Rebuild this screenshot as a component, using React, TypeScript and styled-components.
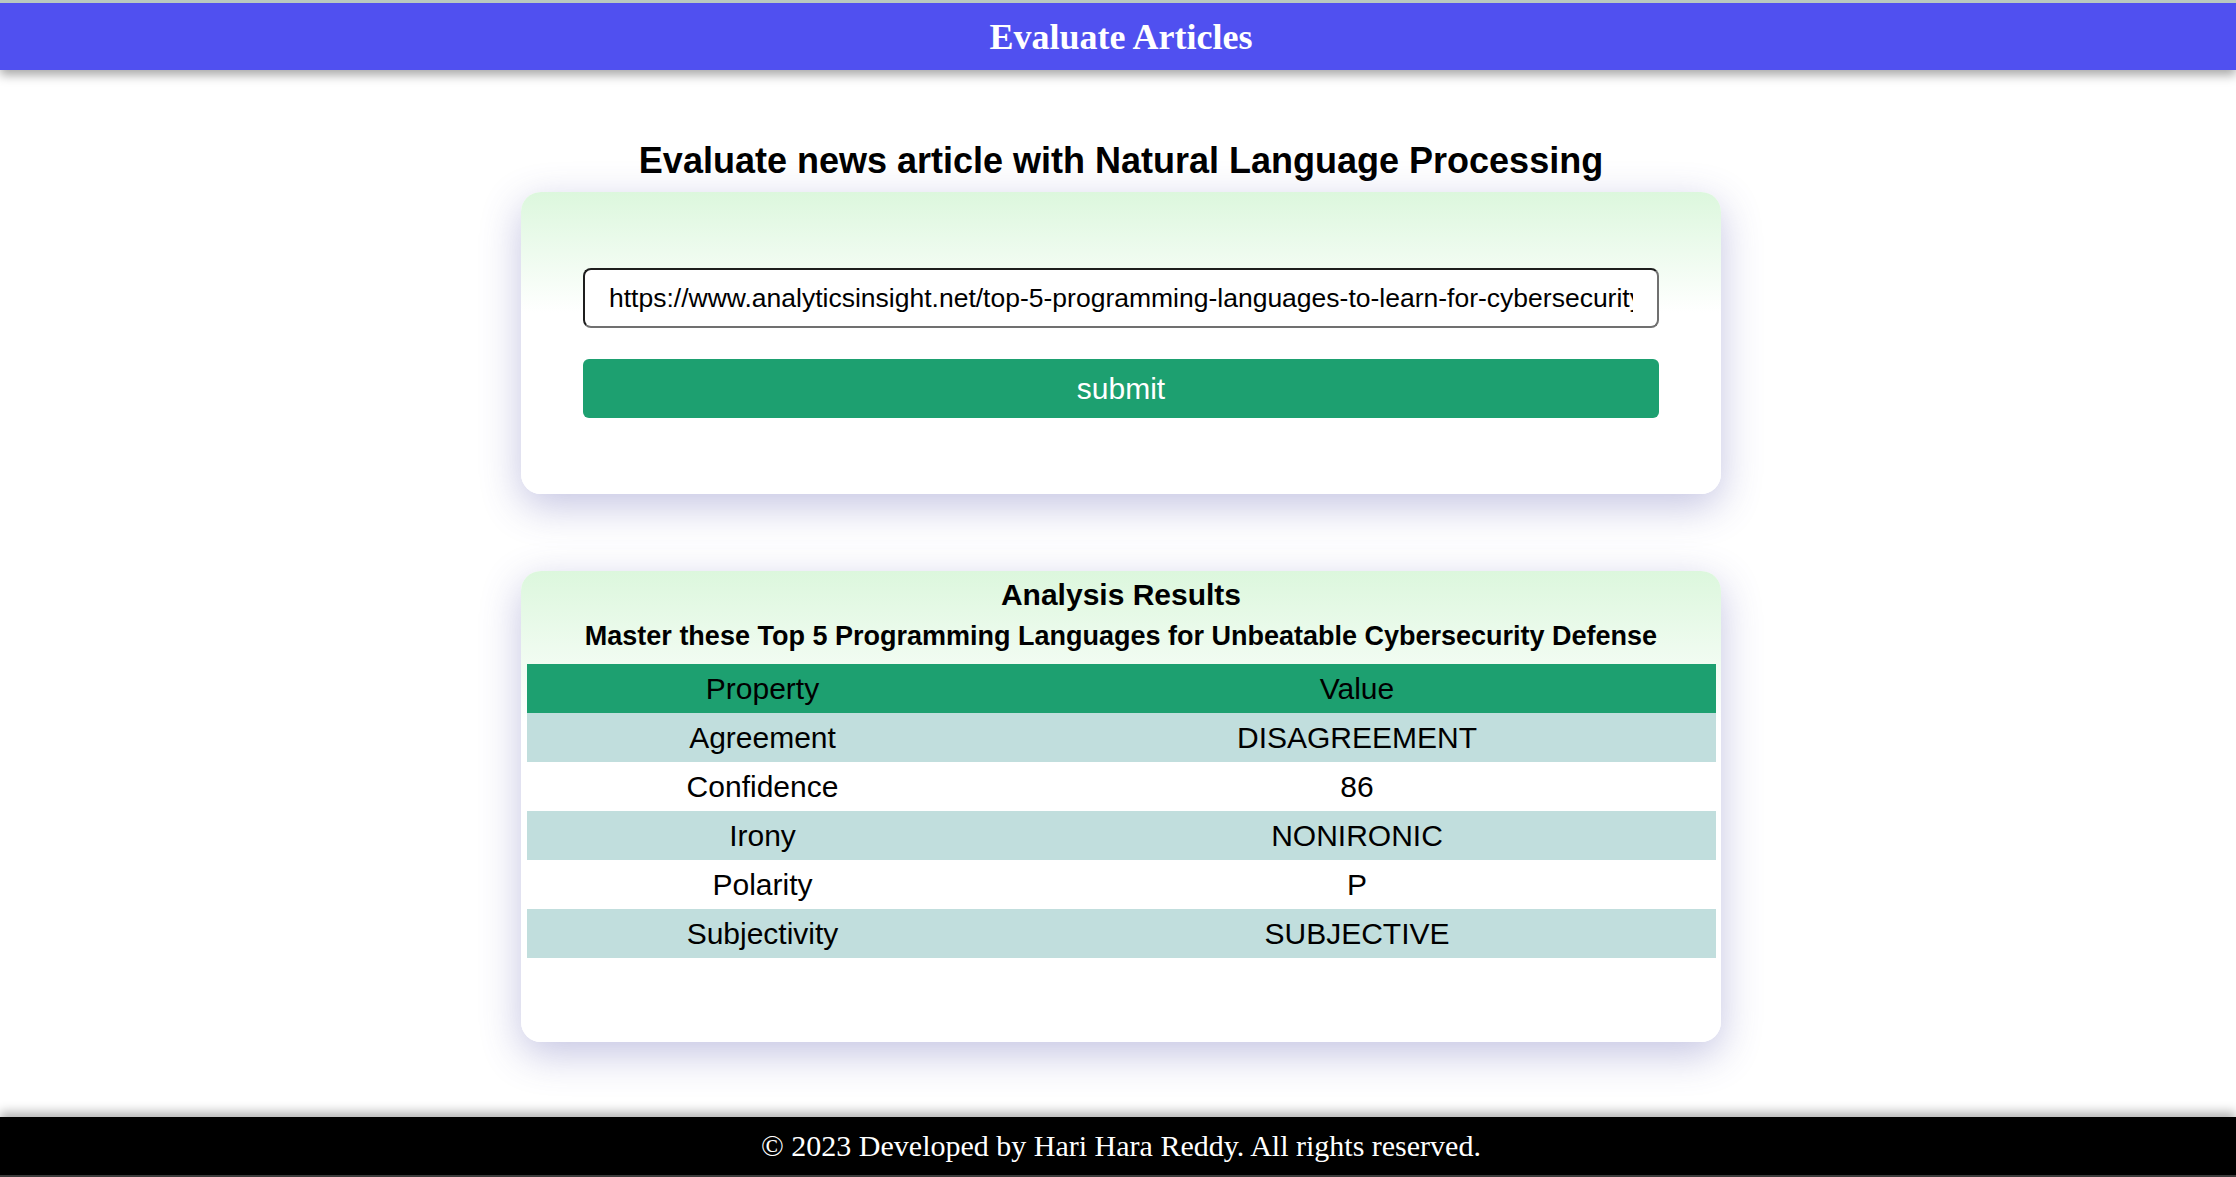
import React from "react";
import styled, { createGlobalStyle } from "styled-components";

const Global = createGlobalStyle`
  html, body {
    margin: 0;
    padding: 0;
    background: #ffffff;
  }
  body {
    font-family: "Liberation Sans", Arial, sans-serif;
    color: #000;
  }
  * { box-sizing: border-box; }
`;

const Page = styled.div`
  display: flex;
  flex-direction: column;
  min-height: 100vh;
  overflow: hidden;
`;

const Header = styled.header`
  height: 70px;
  padding-left: 6px;
  border-top: 3px solid #b9c9bf;
  background: #5050f0;
  display: flex;
  align-items: center;
  justify-content: center;
  box-shadow: 0 5px 10px rgba(0, 0, 0, 0.35);
  position: relative;
  z-index: 1;
`;

const Brand = styled.h1`
  margin: 0;
  font-family: "Liberation Serif", "Times New Roman", serif;
  font-size: 36px;
  font-weight: bold;
  color: #ffffff;
  line-height: 1;
`;

const Main = styled.main`
  flex: 1;
  display: flex;
  flex-direction: column;
  align-items: center;
  padding: 70px 0 75px 6px;
`;

const Title = styled.h2`
  margin: 0 0 10px;
  font-size: 36px;
  line-height: 42px;
  font-weight: bold;
  text-align: center;
`;

const Card = styled.section<{ $fade: string }>`
  width: 1200px;
  border-radius: 20px;
  background: linear-gradient(180deg, #dcf7dd 0%, #ffffff ${(p) => p.$fade});
  box-shadow: 0 12px 40px rgba(70, 70, 165, 0.32);
`;

const FormCard = styled(Card)`
  padding: 76px 62px;
  display: flex;
  flex-direction: column;
  gap: 31px;
`;

const UrlInput = styled.input`
  height: 60px;
  width: 100%;
  padding: 0 24px;
  border-width: 2px;
  border-style: solid;
  border-color: #1e1e1e #707070 #707070 #1e1e1e;
  border-radius: 8px;
  font-family: "Liberation Sans", Arial, sans-serif;
  font-size: 26.5px;
  color: #000;
  background: #fff;
  outline: none;
`;

const SubmitButton = styled.button`
  height: 59px;
  width: 100%;
  border: none;
  border-radius: 6px;
  background: #1da070;
  color: #ffffff;
  font-family: "Liberation Sans", Arial, sans-serif;
  font-size: 30px;
  cursor: pointer;
`;

const ResultCard = styled(Card)`
  margin-top: 77px;
  padding: 6px 0 84px;
  display: flex;
  flex-direction: column;
  align-items: center;
`;

const ResultHeading = styled.h3`
  margin: 0;
  font-size: 30px;
  line-height: 36px;
  font-weight: bold;
  text-align: center;
`;

const ArticleTitle = styled.h4`
  margin: 7px 0 12px;
  font-size: 27px;
  line-height: 32px;
  font-weight: bold;
  text-align: center;
`;

const Table = styled.table`
  width: 1189px;
  border-collapse: collapse;
  font-size: 30px;
`;

const HeadCell = styled.th<{ $w?: string }>`
  height: 49px;
  padding: 0;
  background: #1da070;
  font-weight: normal;
  text-align: center;
  vertical-align: middle;
  width: ${(p) => p.$w ?? "auto"};
`;

const Row = styled.tr<{ $shaded: boolean }>`
  background: ${(p) => (p.$shaded ? "#c1dedd" : "#ffffff")};
`;

const Cell = styled.td`
  height: 49px;
  padding: 0;
  text-align: center;
  vertical-align: middle;
`;

const Footer = styled.footer`
  height: 60px;
  padding-left: 6px;
  background: #000;
  border-bottom: 2px solid #3c3c3c;
  display: flex;
  align-items: center;
  justify-content: center;
  box-shadow: 0 -5px 10px rgba(0, 0, 0, 0.3);
`;

const FooterText = styled.p`
  margin: 0;
  font-family: "Liberation Serif", "Times New Roman", serif;
  font-size: 30px;
  color: #fff;
`;

const rows: [string, string][] = [
  ["Agreement", "DISAGREEMENT"],
  ["Confidence", "86"],
  ["Irony", "NONIRONIC"],
  ["Polarity", "P"],
  ["Subjectivity", "SUBJECTIVE"],
];

export default function App() {
  return (
    <Page>
      <Global />
      <Header>
        <Brand>Evaluate Articles</Brand>
      </Header>
      <Main>
        <Title>Evaluate news article with Natural Language Processing</Title>
        <FormCard $fade="40%">
          <UrlInput
            type="text"
            defaultValue="https://www.analyticsinsight.net/top-5-programming-languages-to-learn-for-cybersecurity-defense/"
          />
          <SubmitButton type="button">submit</SubmitButton>
        </FormCard>
        <ResultCard $fade="32%">
          <ResultHeading>Analysis Results</ResultHeading>
          <ArticleTitle>
            Master these Top 5 Programming Languages for Unbeatable Cybersecurity Defense
          </ArticleTitle>
          <Table>
            <thead>
              <tr>
                <HeadCell $w="472px">Property</HeadCell>
                <HeadCell>Value</HeadCell>
              </tr>
            </thead>
            <tbody>
              {rows.map(([k, v], i) => (
                <Row key={k} $shaded={i % 2 === 0}>
                  <Cell>{k}</Cell>
                  <Cell>{v}</Cell>
                </Row>
              ))}
            </tbody>
          </Table>
        </ResultCard>
      </Main>
      <Footer>
        <FooterText>© 2023 Developed by Hari Hara Reddy. All rights reserved.</FooterText>
      </Footer>
    </Page>
  );
}
